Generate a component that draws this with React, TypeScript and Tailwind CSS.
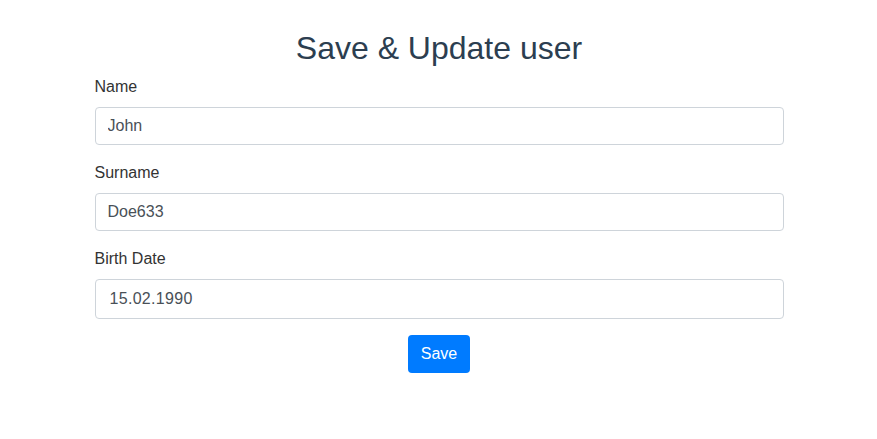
const fields = [
  { label: "Name", value: "John", h: "h-[38px]" },
  { label: "Surname", value: "Doe633", h: "h-[38px]" },
  { label: "Birth Date", value: "15.02.1990", h: "h-[40px]", date: true },
];

export default function App() {
  return (
    <div className="min-h-[439px] bg-white font-['Liberation_Sans',Arial,sans-serif]">
      <div className="mx-auto w-[690px] pt-[29px] pl-[1px]">
        <h1 className="mb-2 text-center text-[32px] leading-[38px] text-[#2c3e50]">
          Save &amp; Update user
        </h1>
        <form onSubmit={(e) => e.preventDefault()}>
          {fields.map((f) => (
            <div key={f.label} className="mb-4">
              <label className="mb-2 block text-[16px] leading-6 text-[#333]">
                {f.label}
              </label>
              <input
                defaultValue={f.value}
                className={`${f.h} w-full rounded border border-[#ced4da] bg-white text-[16px] text-[#495057] outline-none ${
                  f.date ? "px-[14px] tracking-[0.3px]" : "px-3"
                }`}
              />
            </div>
          ))}
          <div className="flex justify-center">
            <button
              type="submit"
              className="h-[38px] rounded bg-[#007bff] px-[13px] text-[16px] text-white"
            >
              Save
            </button>
          </div>
        </form>
      </div>
    </div>
  );
}
